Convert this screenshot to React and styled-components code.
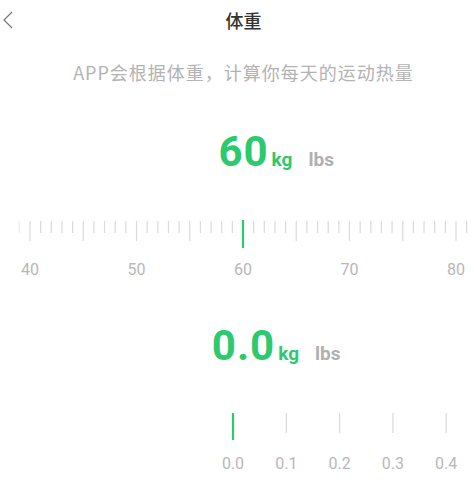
import React from 'react';
import styled, { createGlobalStyle } from 'styled-components';

const GREEN = '#2dc96e';

const GlobalStyle = createGlobalStyle`
  * { box-sizing: border-box; }
  html, body {
    margin: 0;
    padding: 0;
    background: #fff;
  }
  body {
    font-family: Roboto, "Noto Sans CJK SC", "Liberation Sans", sans-serif;
  }
`;

const Page = styled.div`
  width: 474px;
  height: 489px;
  background: #fff;
  overflow: hidden;
`;

/* the screen's centre line sits at x=243.5, so text blocks get a 13px left inset */
const Centered = styled.div`
  padding-left: 13px;
`;

const Header = styled.header`
  position: relative;
  height: 40px;
`;

const BackButton = styled.button`
  position: absolute;
  left: 0;
  top: 0;
  display: flex;
  align-items: center;
  padding: 0 0 0 2px;
  height: 40px;
  border: 0;
  background: none;
  cursor: pointer;
`;

const Title = styled.h1`
  margin: 0;
  text-align: center;
  font-family: "Noto Sans CJK SC", sans-serif;
  font-size: 18px;
  font-weight: 500;
  color: #333;
  line-height: 40px;
`;

const Subtitle = styled.p`
  margin: 20px 0 0;
  text-align: center;
  font-family: "Noto Sans CJK SC", sans-serif;
  font-size: 18px;
  letter-spacing: 1px;
  line-height: 24px;
  color: #b3b3b3;
`;

const ValueRow = styled.div`
  display: grid;
  grid-template-columns: 1fr auto 1fr;
  align-items: baseline;
  margin-top: ${({ $top }) => $top}px;
  line-height: 1;
  font-family: Roboto, "Liberation Sans", sans-serif;
  font-weight: 700;
`;

const Value = styled.span`
  grid-column: 2;
  font-size: 42px;
  color: ${GREEN};
  letter-spacing: 1px;
`;

const Units = styled.div`
  grid-column: 3;
  display: flex;
  align-items: baseline;
  gap: 16px;
  padding-left: 3px;
`;

const Unit = styled.span`
  font-size: 19px;
  color: ${({ $active }) => ($active ? GREEN : '#b0b0b0')};
`;

const RulerBox = styled.div`
  margin-top: ${({ $top }) => $top}px;
  height: ${({ $height }) => $height}px;
`;

const RulerSvg = styled.svg`
  display: block;
  width: 474px;
  height: 100%;

  text {
    font-family: Roboto, "Liberation Sans", sans-serif;
    font-size: 16px;
    fill: #b8b8b8;
  }
`;

function WeightRuler() {
  const step = 10.65;
  const x0 = 30;
  const ticks = [];
  for (let v = 39; v <= 81; v++) ticks.push(v);
  return (
    <RulerBox $top={37} $height={80}>
      <RulerSvg viewBox="0 0 474 80">
        {ticks.map((v) => {
          const x = x0 + (v - 40) * step;
          const long = v % 5 === 0;
          if (v === 60) return null;
          return (
            <line
              key={v}
              x1={x}
              x2={x}
              y1={11}
              y2={long ? 31 : 23}
              stroke={x < 25 ? '#ececec' : '#dadada'}
              strokeWidth="1.2"
            />
          );
        })}
        <line x1={243} x2={243} y1={10} y2={38} stroke={GREEN} strokeWidth="2.2" />
        {[40, 50, 60, 70, 80].map((v) => (
          <text key={v} x={x0 + (v - 40) * step} y={65} textAnchor="middle">
            {v}
          </text>
        ))}
      </RulerSvg>
    </RulerBox>
  );
}

function DecimalRuler() {
  const step = 53.3;
  const x0 = 233;
  const marks = [0, 1, 2, 3, 4];
  return (
    <RulerBox $top={33} $height={89}>
      <RulerSvg viewBox="0 0 474 89">
        {marks.map((m) =>
          m === 0 ? (
            <line key={m} x1={x0} x2={x0} y1={13} y2={40} stroke={GREEN} strokeWidth="2.2" />
          ) : (
            <line
              key={m}
              x1={x0 + m * step}
              x2={x0 + m * step}
              y1={13}
              y2={33}
              stroke="#dadada"
              strokeWidth="1.2"
            />
          )
        )}
        {marks.map((m) => (
          <text key={m} x={x0 + m * step} y={69} textAnchor="middle">
            {`0.${m}`}
          </text>
        ))}
      </RulerSvg>
    </RulerBox>
  );
}

function Reading({ value, top }) {
  return (
    <Centered>
      <ValueRow $top={top}>
        <Value>{value}</Value>
        <Units>
          <Unit $active>kg</Unit>
          <Unit>lbs</Unit>
        </Units>
      </ValueRow>
    </Centered>
  );
}

export default function App() {
  return (
    <>
      <GlobalStyle />
      <Page>
        <Header>
          <BackButton aria-label="返回">
            <svg width="12" height="20" viewBox="0 0 12 20" fill="none">
              <polyline points="10,2 2,10 10,18" stroke="#777" strokeWidth="1.2" />
            </svg>
          </BackButton>
          <Centered>
            <Title>体重</Title>
          </Centered>
        </Header>
        <Centered>
          <Subtitle>APP会根据体重，计算你每天的运动热量</Subtitle>
        </Centered>

        <Reading value="60" top={47} />
        <WeightRuler />

        <Reading value="0.0" top={35} />
        <DecimalRuler />
      </Page>
    </>
  );
}
